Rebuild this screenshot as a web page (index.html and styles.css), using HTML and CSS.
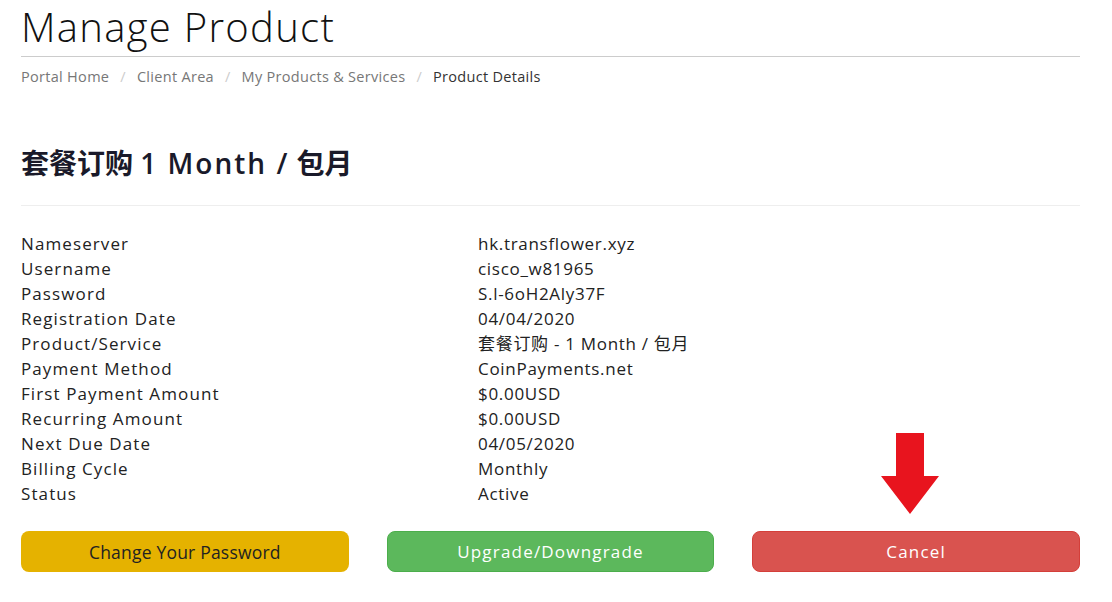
FILE: index.html
```html
<!DOCTYPE html>
<html lang="zh">
<head>
    <meta charset="UTF-8">
    <meta name="viewport" content="width=device-width, initial-scale=1.0">
    <title>Manage Product</title>
    <link rel="stylesheet" href="styles.css">
</head>
<body>
    <div class="container">
        <!-- Cabecera de la pagina -->
        <div class="page-header">
            <h1>Manage Product</h1>
        </div>
        <ol class="breadcrumb">
            <li><a href="#">Portal Home</a></li>
            <li><a href="#">Client Area</a></li>
            <li><a href="#">My Products &amp; Services</a></li>
            <li class="active">Product Details</li>
        </ol>

        <h2 class="product-title">套餐订购 <span class="latin">1 Month /</span> 包月</h2>
        <hr class="divider">

        <div class="details">
            <div class="label">Nameserver</div><div class="value">hk.transflower.xyz</div>
            <div class="label">Username</div><div class="value">cisco_w81965</div>
            <div class="label">Password</div><div class="value">S.l-6oH2Aly37F</div>
            <div class="label">Registration Date</div><div class="value">04/04/2020</div>
            <div class="label">Product/Service</div><div class="value">套餐订购 - 1 Month / 包月</div>
            <div class="label">Payment Method</div><div class="value">CoinPayments.net</div>
            <div class="label">First Payment Amount</div><div class="value">$0.00USD</div>
            <div class="label">Recurring Amount</div><div class="value">$0.00USD</div>
            <div class="label">Next Due Date</div><div class="value">04/05/2020</div>
            <div class="label">Billing Cycle</div><div class="value">Monthly</div>
            <div class="label">Status</div><div class="value">Active</div>
        </div>

        <div class="actions">
            <button class="btn btn-warning">Change Your Password</button>
            <button class="btn btn-success">Upgrade/Downgrade</button>
            <div class="cancel-wrap">
                <!-- Flecha roja apuntando al boton de cancelar -->
                <svg class="arrow" width="60" height="82" viewBox="0 0 60 82">
                    <polygon points="15,0 43,0 43,43 58,43 29,81 0,43 15,43" fill="#e8141e"/>
                </svg>
                <button class="btn btn-danger">Cancel</button>
            </div>
        </div>
    </div>
</body>
</html>
```
FILE: styles.css
```css
body {
    margin: 0;
    padding: 0;
    background-color: #fff;
    font-family: "Open Sans", "Noto Sans CJK SC", sans-serif;
    color: #333;
}
.container {
    width: 1059px;
    margin-left: 21px;
}
.page-header {
    border-bottom: 1px solid #ccc;
    padding-bottom: 6px;
}
.page-header h1 {
    margin: 0;
    padding-top: 4px;
    font-size: 40px;
    font-weight: 300;
    letter-spacing: 1.3px;
    color: #111;
    line-height: 46px;
}
.breadcrumb {
    list-style: none;
    margin: 0;
    padding: 10px 0 0;
    display: flex;
    font-size: 14.5px;
    letter-spacing: 0.3px;
    line-height: 20px;
}
.breadcrumb li + li::before {
    content: "/";
    color: #ccc;
    padding: 0 11px;
}
.breadcrumb a {
    color: #777;
    text-decoration: none;
}
.breadcrumb .active {
    color: #333;
}
.product-title {
    margin: 56px 0 0;
    font-size: 28px;
    font-weight: 700;
    color: #1a1a2a;
    line-height: 40px;
}
.product-title .latin {
    font-weight: 600;
    letter-spacing: 2px;
}
.divider {
    border: 0;
    border-top: 1px solid #eee;
    margin: 22px 0 25px;
}
.details {
    display: grid;
    grid-template-columns: 457px 1fr;
    font-size: 17px;
    letter-spacing: 0.7px;
    line-height: 25px;
    color: #222;
}
.details .label {
    letter-spacing: 1.1px;
}
.actions {
    display: grid;
    grid-template-columns: repeat(3, 1fr);
    gap: 38px;
    margin-top: 25px;
}
.cancel-wrap {
    position: relative;
}
.arrow {
    position: absolute;
    left: 129px;
    top: -98px;
}
.btn {
    width: 100%;
    height: 41px;
    border: 1px solid transparent;
    border-radius: 8px;
    font-family: "Open Sans", sans-serif;
    font-size: 17px;
    letter-spacing: 1.2px;
    cursor: pointer;
}
.btn-warning {
    background-color: #e5b200;
    color: #222;
    font-size: 17.5px;
    letter-spacing: 0.2px;
}
.btn-success {
    background-color: #5cb85c;
    border-color: #4cae4c;
    color: #fff;
}
.btn-danger {
    background-color: #d9534f;
    border-color: #d43f3a;
    color: #fff;
}
```
